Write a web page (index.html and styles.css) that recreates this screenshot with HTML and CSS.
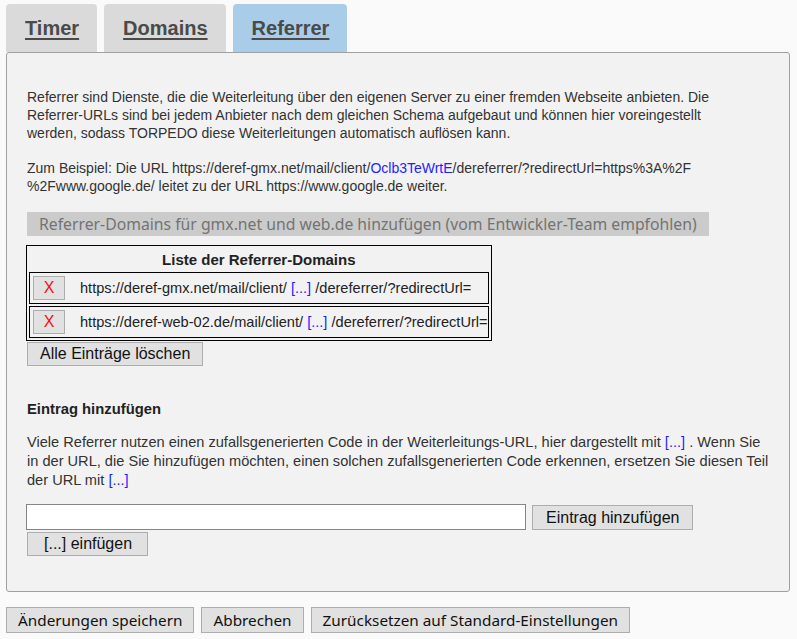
FILE: index.html
```html
<!DOCTYPE html>
<html lang="de">
<head>
<meta charset="utf-8">
<title>TORPEDO Einstellungen</title>
<link rel="stylesheet" href="styles.css">
</head>
<body>
<nav class="tabs">
  <a class="tab" href="#">Timer</a>
  <a class="tab" href="#">Domains</a>
  <a class="tab active" href="#">Referrer</a>
</nav>
<section class="panel">
  <p class="text">Referrer sind Dienste, die die Weiterleitung über den eigenen Server zu einer fremden Webseite anbieten. Die Referrer-URLs sind bei jedem Anbieter nach dem gleichen Schema aufgebaut und können hier voreingestellt werden, sodass TORPEDO diese Weiterleitungen automatisch auflösen kann.</p>
  <p class="text second">Zum Beispiel: Die URL https://deref-gmx.net/mail/client/<span class="link">Oclb3TeWrtE</span>/dereferrer/?redirectUrl=https%3A%2F %2Fwww.google.de/ leitet zu der URL https://www.google.de weiter.</p>
  <button class="btn-disabled" disabled>Referrer-Domains für gmx.net und web.de hinzufügen (vom Entwickler-Team empfohlen)</button>
  <table class="list">
    <tr><th>Liste der Referrer-Domains</th></tr>
    <tr><td><div class="entry"><button class="btn btn-x">X</button><span>https://deref-gmx.net/mail/client/ <span class="link">[...]</span> /dereferrer/?redirectUrl=</span></div></td></tr>
    <tr><td><div class="entry"><button class="btn btn-x">X</button><span>https://deref-web-02.de/mail/client/ <span class="link">[...]</span> /dereferrer/?redirectUrl=</span></div></td></tr>
  </table>
  <button class="btn btn-clear">Alle Einträge löschen</button>
  <h3 class="heading">Eintrag hinzufügen</h3>
  <p class="text third">Viele Referrer nutzen einen zufallsgenerierten Code in der Weiterleitungs-URL, hier dargestellt mit <span class="link">[...]</span> . Wenn Sie in der URL, die Sie hinzufügen möchten, einen solchen zufallsgenerierten Code erkennen, ersetzen Sie diesen Teil der URL mit <span class="link">[...]</span></p>
  <div class="add-row">
    <input class="url-input" type="text">
    <button class="btn btn-add">Eintrag hinzufügen</button>
  </div>
  <button class="btn btn-insert">[...] einfügen</button>
</section>
<footer class="actions">
  <button class="btn-ui">Änderungen speichern</button>
  <button class="btn-ui">Abbrechen</button>
  <button class="btn-ui">Zurücksetzen auf Standard-Einstellungen</button>
</footer>
</body>
</html>
```
FILE: styles.css
```css
html, body {
  margin: 0;
  background: #fafafa;
}
body {
  padding: 4px 7px 0 6px;
  font-family: "Liberation Sans", Arial, sans-serif;
  color: #333;
}
.tabs {
  display: flex;
  gap: 7px;
  height: 48px;
}
.tab {
  display: flex;
  align-items: center;
  padding: 0 18px 0 19px;
  background: #dadada;
  border-radius: 4px 4px 0 0;
  font-size: 20px;
  font-weight: bold;
  color: #4a4a4a;
  text-decoration: underline;
  text-underline-offset: 3px;
  text-decoration-thickness: 2px;
}
.tab.active {
  background: #a9cde8;
}
.panel {
  background: #f2f2f2;
  border: 1px solid #a0a0a0;
  border-radius: 3px;
  padding: 35px 20px 35px 20px;
  display: flex;
  flex-direction: column;
  align-items: flex-start;
}
.text {
  margin: 0;
  font-size: 14px;
  line-height: 18px;
  color: #333;
  max-width: 700px;
}
.second {
  margin-top: 17px;
  max-width: 720px;
}
.link {
  color: #1f1fff;
}
.btn-disabled {
  margin-top: 17px;
  height: 24px;
  padding: 0 12px;
  border: none;
  background: #cbcbcb;
  color: #737373;
  font-family: "Noto Sans", "Open Sans", sans-serif;
  font-size: 15.75px;
}
.list {
  margin-top: 9px;
  margin-left: -1px;
  border: 1px solid #000;
  border-spacing: 2px;
  font-size: 14.6px;
}
.list th {
  height: 22px;
  padding: 0;
  font-size: 15px;
  font-weight: bold;
  color: #222;
  text-align: center;
}
.list td {
  border: 1px solid #000;
  padding: 3px 0 3px 3px;
}
.entry {
  display: flex;
  align-items: center;
  gap: 15px;
  color: #222;
  white-space: nowrap;
}
.btn {
  height: 24px;
  padding: 0 13px;
  border: 1px solid #adadad;
  background: #e1e1e1;
  color: #111;
  font-family: "Liberation Sans", Arial, sans-serif;
  font-size: 16px;
}
.btn-x {
  width: 32px;
  padding: 0;
  color: #f01010;
}
.btn-clear {
  margin-top: 1px;
  padding: 0 12px;
}
.heading {
  margin: 34px 0 0 0;
  font-size: 14.8px;
  line-height: 18px;
  color: #222;
}
.third {
  margin-top: 15px;
  font-size: 14.6px;
  line-height: 19px;
  max-width: 742px;
}
.add-row {
  margin-top: 14px;
  margin-left: -1px;
  display: flex;
  gap: 6px;
  align-items: flex-start;
}
.url-input {
  width: 500px;
  height: 26px;
  box-sizing: border-box;
  border: 1px solid #858585;
  background: #fff;
  margin: 0;
}
.btn-add {
  margin-top: 1px;
  height: 25px;
}
.btn-insert {
  margin-top: 2px;
  padding: 0 15px 0 16px;
}
.actions {
  display: flex;
  gap: 7px;
  margin-top: 15px;
}
.btn-ui {
  height: 26px;
  padding: 0 11px;
  border: 1px solid #adadad;
  background: #e1e1e1;
  color: #111;
  font-family: "Noto Sans", "Open Sans", sans-serif;
  font-size: 15.3px;
}
```
